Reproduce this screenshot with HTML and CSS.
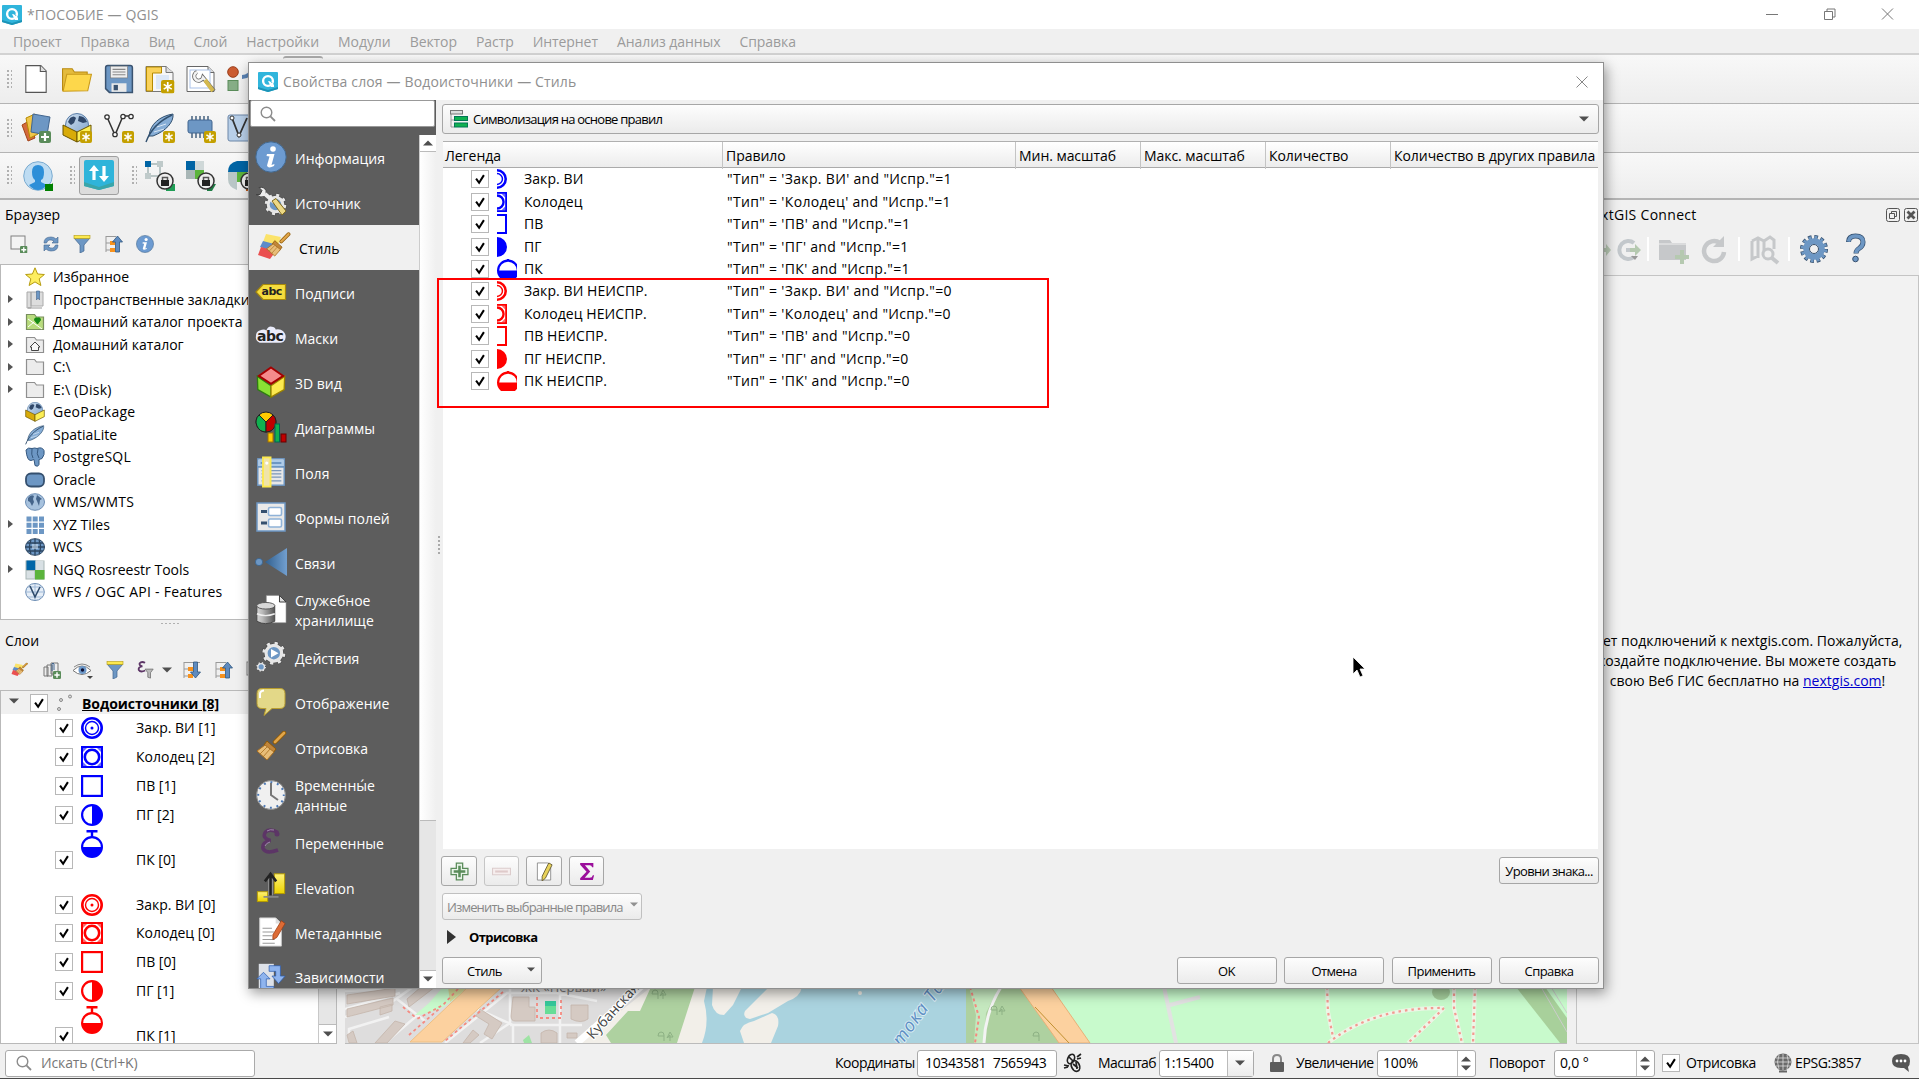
FILE: index.html
```html
<!DOCTYPE html>
<html lang="ru">
<head>
<meta charset="utf-8">
<title>*ПОСОБИЕ — QGIS</title>
<link rel="stylesheet" href="styles.css">
</head>
<body>
<svg class="sprite" aria-hidden="true">
  <defs>
    <linearGradient id="gRel" x1="0" x2="1"><stop offset="0" stop-color="#31608f"/><stop offset="1" stop-color="#729fcf"/></linearGradient>
    <linearGradient id="gDb" x1="0" x2="1"><stop offset="0" stop-color="#d5d5d5"/><stop offset=".3" stop-color="#bbb"/><stop offset="1" stop-color="#555"/></linearGradient>
    <linearGradient id="gElev" x1="0" y1="0" x2="0" y2="1"><stop offset="0" stop-color="#fff27a"/><stop offset="1" stop-color="#edd400"/></linearGradient>
    <linearGradient id="gEarth" x1="0" y1="0" x2="1" y2="1"><stop offset="0" stop-color="#cfe0f0"/><stop offset="1" stop-color="#7fa3cc"/></linearGradient>
  </defs>
  <symbol id="logo" viewBox="0 0 20 20"><path d="M0 1q0-1 1-1h18q1 0 1 1v16l-10 3-10-3z" fill="#30b5dc"/><path d="M0 15l10 3 10-3v2l-10 3-10-3z" fill="#1c93b6"/><circle cx="10" cy="9" r="4.900" fill="none" stroke="#fff" stroke-width="2.400"/><path d="M10 9h3l3 4v2h-3z" fill="#fff"/><path d="M9.500 8.500l2.500.3 2 2" stroke="#30b5dc" fill="none"/></symbol>
  <symbol id="check" viewBox="0 0 18 18"><path d="M4.600 8.600L8 13.200 13.400 4.600" fill="none" stroke="#000" stroke-width="2.300"/></symbol>
  <symbol id="star6" viewBox="0 0 12 12"><rect width="12" height="12" rx="2" fill="#c4a000"/><path d="M6 1.800v8.400M2.400 3.900l7.200 4.200M9.600 3.900L2.400 8.100" stroke="#fff" stroke-width="1.500"/></symbol>
  <symbol id="plusb" viewBox="0 0 12 12"><rect width="12" height="12" rx="2" fill="#5a8c5a"/><path d="M6 2v8M2 6h8" stroke="#fff" stroke-width="2.200"/></symbol>
  <symbol id="mag" viewBox="0 0 16 16"><circle cx="6.500" cy="6.500" r="5.300" fill="none" stroke="#8c8c8c" stroke-width="1.400"/><path d="M10.400 10.400L15 15" stroke="#8c8c8c" stroke-width="1.800"/></symbol>
  <symbol id="new" viewBox="0 0 28 28"><path d="M4.500 1.500h14l5 5v20h-19z" fill="#fff" stroke="#555"/><path d="M18 1.500v5.500h5.500" fill="#ddd" stroke="#555"/></symbol>
  <symbol id="open" viewBox="0 0 28 28"><path d="M.5 25V4.500h9l2 3h12V12" fill="#e4bb3c" stroke="#b98a11"/><path d="M1 25.500L4.500 9.500h23L24 25z" fill="#fdd74b" stroke="#c99a1b"/></symbol>
  <symbol id="save" viewBox="0 0 28 28"><path d="M1.500 3.500q0-2 2-2h21q2 0 2 2v23H5l-3.500-3.500z" fill="#6d97c4" stroke="#3a5370" stroke-width="1.400"/><rect x="6" y="2" width="16" height="11" fill="#eee" stroke="#777" stroke-width=".6"/><path d="M8 5h12M8 7.500h12M8 10h12" stroke="#888"/><rect x="7" y="18" width="14" height="8" fill="#eaeaea"/><rect x="9" y="19.500" width="4" height="5" fill="#3a5370"/></symbol>
  <symbol id="layoutnew" viewBox="0 0 30 28"><path d="M1 1.500h20l7 6v19H1z" fill="#f7f7f7" stroke="#777"/><path d="M21 1.500v6h7" fill="#ddd" stroke="#777"/><path d="M1.500 2h15v6h-9v18h-6z" fill="#fad25a" stroke="#b68b00"/><path d="M11 10h13v14H11z" fill="#dde8f7"/><use href="#star6" x="16" y="15" width="13.500" height="13.500"/></symbol>
  <symbol id="layoutmgr" viewBox="0 0 30 28"><path d="M1 1.500h21l6 6v19H1z" fill="#fff" stroke="#666"/><path d="M22 1.500v6h6" fill="#ddd" stroke="#666"/><rect x="4" y="5" width="20" height="18" fill="#fff" stroke="#a9c1e8"/><path d="M11 7a4.500 4.500 0 1 0 6 5.500L28 26" fill="none" stroke="#666" stroke-width="4"/><path d="M11 7a4.500 4.500 0 1 0 6 5.500L20 16" fill="none" stroke="#f2f2f2" stroke-width="2.500"/><path d="M19 15l8 11" stroke="#d4b94e" stroke-width="4"/></symbol>
  <symbol id="stylemgr" viewBox="0 0 30 28"><circle cx="6" cy="7" r="5.300" fill="#cb5b30" stroke="#9b3d19"/><rect x="1" y="15.500" width="10" height="10" fill="#86ad86" stroke="#5a8c5a"/><path d="M15 12q8 0 12-10" stroke="#5a83b5" stroke-width="4" fill="none"/></symbol>
  <symbol id="dsm" viewBox="0 0 30 30"><path d="M1 12l7-4 6 17-7 3z" fill="#d46a3b" stroke="#a3431a"/><path d="M5 5l9-4 3 20-8 4z" fill="#efc54a" stroke="#b68b00"/><path d="M12 1l17 3-3 18-16-3z" fill="#6d97c4" stroke="#41658f"/><use href="#plusb" x="18" y="18" width="12" height="12"/></symbol>
  <symbol id="geopk" viewBox="0 0 30 30"><circle cx="15" cy="12" r="11.500" fill="url(#gEarth)" stroke="#5b7ea8"/><path d="M8 5q4-3 6 0l-2 5-3 2-3-3zM17 3q6 0 8 6l-4 1-5-2z" fill="#30486a"/><path d="M1 12l14 7v10L1 22z" fill="#d8ab09" stroke="#6b5500"/><path d="M29 12l-14 7v10l14-7z" fill="#fcee55" stroke="#6b5500"/></symbol>
  <symbol id="shp" viewBox="0 0 30 30"><path d="M3 4l8 18L19 3h8" fill="none" stroke="#333" stroke-width="1.500"/><g fill="#fff" stroke="#333" stroke-width="1.300"><circle cx="3" cy="4" r="2.200"/><circle cx="11" cy="21.500" r="2.200"/><circle cx="19" cy="3.500" r="2.200"/><circle cx="27" cy="3.500" r="2.200"/></g></symbol>
  <symbol id="feather" viewBox="0 0 30 30"><path d="M4 23C5 11 15 3 28 1c1 8-7 17-20 22z" fill="#86add6" stroke="#31506f"/><path d="M1 29C5 18 14 8 27 2" fill="none" stroke="#31506f" stroke-width="1.400"/><path d="M9 19l10-3M12 14l9-3" stroke="#d9e7f4"/></symbol>
  <symbol id="chip" viewBox="0 0 30 30"><path d="M6 3v22M10 3v22M14 3v22M18 3v22M22 3v22" stroke="#45617f" stroke-width="1.500"/><rect x="2" y="7" width="24" height="13" rx="2" fill="#6d97c4" stroke="#41658f"/></symbol>
  <symbol id="virt" viewBox="0 0 30 30"><rect x="1" y="2" width="27" height="26" rx="2" fill="#b8cfe8" stroke="#6d87a8"/><path d="M5 5l7 18 8-18" fill="none" stroke="#333" stroke-width="1.800"/><circle cx="5" cy="5" r="2" fill="#fff" stroke="#333"/><circle cx="12" cy="22" r="2" fill="#fff" stroke="#333"/></symbol>
  <symbol id="user" viewBox="0 0 30 30"><circle cx="15" cy="15" r="14.300" fill="#bedcf2" stroke="#7aabd0"/><path d="M9 11q0-7 6-7t6 7-3 8v2l6 3q-4 5-9 5t-9-5l6-3v-2q-3-2-3-8z" fill="#2d8fd8"/><path d="M30 22v8h-8z" fill="#008000"/><rect x="22" y="23" width="8" height="7" fill="#008000"/></symbol>
  <symbol id="sync" viewBox="0 0 30 30"><path d="M0 2q0-2 2-2h26q2 0 2 2v24l-15 4-15-4z" fill="#2fb4da"/><path d="M0 22l15 5 15-5v4l-15 4-15-4z" fill="#3aa5a9"/><path d="M10 20V8M20 6v12" stroke="#fff" stroke-width="3.200"/><path d="M5 11l5-6 5 6zM15 16h10l-5 6z" fill="#fff"/></symbol>
  <symbol id="lock" viewBox="0 0 18 18"><circle cx="9" cy="9" r="8" fill="#eee" stroke="#333" stroke-width="1.500"/><rect x="5" y="8" width="8" height="6" fill="#222"/><path d="M6.500 8V5.500h5V8" stroke="#555" fill="none" stroke-width="1.500"/></symbol>
  <symbol id="rr1" viewBox="0 0 30 30"><path d="M3 3h13M3 3v12h12V3" fill="none" stroke="#a5b5b5" stroke-width="1.500"/><rect width="6" height="6" fill="#0064a4"/><rect x="12" y="0" width="6" height="6" fill="#bfcaca"/><rect x="0" y="12" width="6" height="6" fill="#bfcaca"/><path d="M21 23h9v7h-9z" fill="#1f9d55"/><use href="#lock" x="11" y="11" width="18" height="18"/></symbol>
  <symbol id="rr2" viewBox="0 0 30 30"><rect width="9" height="9" fill="#0064a4"/><rect x="9" width="9" height="9" fill="#cfd8d8"/><rect y="9" width="9" height="9" fill="#a8b6b6"/><rect x="9" y="9" width="9" height="9" fill="#5bb43c"/><path d="M21 23h9l-4 7h-5z" fill="#1f7d45"/><use href="#lock" x="11" y="11" width="18" height="18"/></symbol>
  <symbol id="rr3" viewBox="0 0 30 30"><path d="M9 0h11v11H0q0-9 9-11" fill="#0064a4"/><path d="M0 11h9v18Q0 26 0 18z" fill="#b9c6c6"/><rect x="9" y="11" width="10" height="10" fill="#5bb43c"/><path d="M18 24h10v6H18z" fill="#c05a1a"/><use href="#lock" x="12" y="11" width="18" height="18"/></symbol>
  <symbol id="addl" viewBox="0 0 18 18"><rect x="1" y="1" width="14" height="13" fill="#f4f4f4" stroke="#808080"/><use href="#plusb" x="10" y="11" width="7.500" height="7.500"/></symbol>
  <symbol id="refresh" viewBox="0 0 18 18"><path d="M2 8q0-6 7-6 3 0 5 2l2-2v6h-6l2-2Q6 3 4.500 8z" fill="#6d97c4" stroke="#41658f" stroke-width=".6"/><path d="M16 10q0 6-7 6-3 0-5-2l-2 2v-6h6l-2 2q6 3 7.500-2z" fill="#6d97c4" stroke="#41658f" stroke-width=".6"/></symbol>
  <symbol id="filter" viewBox="0 0 18 18"><path d="M1 3h16l-6 7v6l-4 2v-8z" fill="#6d97c4" stroke="#41658f" stroke-width=".7"/><rect x="1" y="0.500" width="16" height="3" fill="#fce94f" stroke="#b59b10" stroke-width=".6"/></symbol>
  <symbol id="collapse" viewBox="0 0 18 18"><path d="M1 1v16M1 1.500h10M1 8h4M1 15h4" stroke="#999" fill="none"/><path d="M5 6h5v4H5zM5 13h5v4H5z" fill="#f7921e"/><path d="M12.500 1l5 6h-3v10h-4V7h-3z" fill="#5f8bbf" stroke="#2f557f" stroke-width=".8"/></symbol>
  <symbol id="expand" viewBox="0 0 18 18"><path d="M1 1v16M1 1.500h16M1 8h4M1 15h4" stroke="#999" fill="none"/><path d="M5 6h5v4H5zM5 13h5v4H5z" fill="#f7921e"/><path d="M12.500 17l5-6h-3V1h-4v10h-3z" fill="#5f8bbf" stroke="#2f557f" stroke-width=".8"/></symbol>
  <symbol id="info" viewBox="0 0 32 32"><circle cx="16" cy="16" r="15.200" fill="#6d9bd1" stroke="#44698f"/><circle cx="18" cy="8" r="2.800" fill="#fff"/><path d="M12 13h7.500l-3 11 3-1-.5 2q-6 3-7-.5l2.500-9-3-.5z" fill="#fff"/></symbol>
  <symbol id="star" viewBox="0 0 20 20"><path d="M10 .8l2.600 6.200 6.800.5-5.200 4.300 1.700 6.700L10 14.900l-5.900 3.600 1.700-6.700L.6 7.500 7.400 7z" fill="#fdee5f" stroke="#b59b10"/></symbol>
  <symbol id="bmark" viewBox="0 0 20 20"><path d="M2 2h4v16H2zM6 2h12v14H6z" fill="#ddd" stroke="#aaa"/><path d="M3 18h14" stroke="#999"/><path d="M11.500 1h3v9l-1.500-2-1.500 2z" fill="#6d97c4" stroke="#41658f" stroke-width=".6"/></symbol>
  <symbol id="folder" viewBox="0 0 20 20"><path d="M1.500 17.500v-15h8l2 2.500h7v12.500z" fill="#ececec" stroke="#8f8f8f" stroke-width="1.200"/></symbol>
  <symbol id="fproj" viewBox="0 0 20 20"><path d="M1.500 17.500v-15h8l2 2.500h7v12.500z" fill="#b9dc7e" stroke="#7a8f5f" stroke-width="1.200"/><path d="M3 7l14 10M3 15l6-5" stroke="#fff"/><path d="M12.500 12l-3-4q0-3 3-2 3-1 3 2z" fill="#168a16" stroke="#168a16"/></symbol>
  <symbol id="fhome" viewBox="0 0 20 20"><use href="#folder" width="20" height="20"/><path d="M5 12l5-5 5 5h-1.500v3.500h-7V12z" fill="#f6f6f6" stroke="#444"/></symbol>
  <symbol id="pg" viewBox="0 0 20 20"><path d="M1 3q2-3 6-1.500 3-1 5 0 5-2 7 2 1 4-2 8l-3 1v5q-1 3-4 1l-1-6-3 1Q2 14 1 3z" fill="#6d97c4" stroke="#35587f"/><path d="M7 2q-1 6 1 9M13 2q-2 5 1 9" fill="none" stroke="#35587f"/></symbol>
  <symbol id="oracle" viewBox="0 0 20 20"><rect x="1" y="3.500" width="18" height="13" rx="5" fill="#6d97c4" stroke="#35506f" stroke-width="1.800"/></symbol>
  <symbol id="earth" viewBox="0 0 20 20"><ellipse cx="10" cy="10" rx="9.500" ry="8.300" fill="#a7c2de" stroke="#6b8cb3"/><path d="M3 6q3-4 6-2l-1 3 1 3-2 4-2-4-2-1zM12 3l5 4-2 1-1 6-2-5-1-2z" fill="#44648a"/></symbol>
  <symbol id="tiles" viewBox="0 0 20 20"><path d="M1.500 1.500h5v5h-5zM7.700 1.500h5v5h-5zM14 1.500h5v5h-5zM1.500 7.700h5v5h-5zM7.700 7.700h5v5h-5zM14 7.700h5v5h-5zM1.500 14h5v5h-5zM7.700 14h5v5h-5zM14 14h5v5h-5z" fill="#6d97c4"/></symbol>
  <symbol id="wcs" viewBox="0 0 20 20"><ellipse cx="10" cy="10" rx="9.500" ry="8.300" fill="#6d97c4" stroke="#2c4560"/><path d="M10 1.700v16.600M.5 10h19M2 6h16M2 14h16M6 3q-3 7 0 14M14 3q3 7 0 14" fill="none" stroke="#2c4560" stroke-width="1.300"/><path d="M7 7h6v5H7z" fill="#c8daec" opacity=".6"/></symbol>
  <symbol id="ngq" viewBox="0 0 20 20"><rect x=".5" y=".5" width="19" height="19" fill="#a8b6b6"/><rect x="1.500" y=".5" width="9" height="9.500" fill="#0066a8"/><rect x="10.500" y="1" width="8" height="9" fill="#d8e0e4"/><rect x="1.500" y="11" width="8" height="7.500" fill="#d8e0e4"/><rect x="10" y="10" width="9.500" height="9.500" fill="#5bb43c"/></symbol>
  <symbol id="wfs" viewBox="0 0 20 20"><ellipse cx="10" cy="10" rx="9.300" ry="8.500" fill="#e6eef7" stroke="#6b8cb3"/><path d="M10 2v16M1 10h18M3 5h14M3 15h14" stroke="#9fb9d8"/><path d="M5 4l5 11 5-10" fill="none" stroke="#2e4a6b" stroke-width="1.600"/></symbol>
  <symbol id="gear" viewBox="0 0 32 32"><circle cx="16" cy="16" r="12.500" fill="none" stroke="#444" stroke-width="6.500" stroke-dasharray="5 4.820"/><circle cx="16" cy="16" r="10.500" fill="none" stroke="#444" stroke-width="5"/><circle cx="16" cy="16" r="12.300" fill="none" stroke="#e6e6e6" stroke-width="5.500" stroke-dasharray="4 5.660" stroke-dashoffset="-.5"/><circle cx="16" cy="16" r="10.200" fill="#6d97c4" stroke="#e6e6e6" stroke-width="4.200"/></symbol>
  <symbol id="source" viewBox="0 0 32 32"><use href="#gear" x="9" y="7" width="23" height="23"/><path d="M4 1.500q5-1 7 3 1 4-1 6-4 2-9-2l4 0 2-4zM10 9l8 7" fill="#eee" stroke="#444"/><path d="M10 8l9 8" stroke="#eee" stroke-width="4"/><path d="M17 15l4-2.500L31 25l-4 4z" fill="#ecd884" stroke="#806a20"/></symbol>
  <symbol id="brush" viewBox="0 0 32 32"><path d="M29 2l-9 9" stroke="#8f5902" stroke-width="4.500" stroke-linecap="round"/><path d="M29 2l-9 9" stroke="#e0a54a" stroke-width="2.800" stroke-linecap="round"/><path d="M12 10l9 8-3 4-9-8z" fill="#c1853a" stroke="#8f5902"/><path d="M10 14l9 7-7 8L2 20z" fill="#e8bd78" stroke="#a86e20"/><path d="M12 16l-7 7M15 18l-7 8" stroke="#a86e20" stroke-width=".8"/></symbol>
  <symbol id="stylei" viewBox="0 0 36 32"><path d="M9 3l15 3-4 10-14-5z" fill="#fbe36a"/><path d="M6 10l15 4-3 7L3 16z" fill="#5e8bc9"/><path d="M4 16l15 4-6 8-12-4z" fill="#ea5050"/><use href="#brush" x="8" y="1" width="26" height="27"/></symbol>
  <symbol id="abc" viewBox="0 0 32 32"><path d="M1 16l7-7.500h22.500v15H8z" fill="#f5dc3e" stroke="#a8890a" stroke-width="1.200"/></symbol>
  <symbol id="mask" viewBox="0 0 34 32"><path d="M5 9q5-2 7 0 2-5 6-4 3 0 4 3 5-1 8 2 4 4 2 9-2 4-6 3H5Q0 20 1 15q0-5 4-6z" fill="#eaecfb"/></symbol>
  <symbol id="cube" viewBox="0 0 32 34"><path d="M1.500 11L16 21v12L2 25z" fill="#8ae234" stroke="#2e7d10" stroke-width="1.400"/><path d="M30.500 11L16 21v12l14-8z" fill="#fce94f" stroke="#9c8200" stroke-width="1.400"/><path d="M16 1.500L29 10.500 16 19 3 10.500z" fill="#f58b8b" stroke="#a40000" stroke-width="2"/></symbol>
  <symbol id="diag" viewBox="0 0 32 32"><circle cx="11" cy="11" r="10" fill="#fc0" stroke="#222"/><path d="M11 11L4 4a10 10 0 0 0 7 17z" fill="#10b050" stroke="#222"/><path d="M11 11l7-7a10 10 0 0 1-7 17z" fill="#c00000" stroke="#222"/><rect x="13" y="22" width="5" height="9" fill="#fc0" stroke="#a07000"/><rect x="20" y="13" width="4.500" height="18" fill="#10b050" stroke="#065"/><rect x="26" y="23" width="5" height="8" fill="#c00000" stroke="#600"/></symbol>
  <symbol id="fields" viewBox="0 0 32 34"><rect x="2" y="3" width="28" height="28" fill="#e7e7e7" stroke="#6d97c4" stroke-width="1.500"/><path d="M2.500 4h27v7h-27z" fill="#aecbe8"/><path d="M5 7.500h22M2 11.500h28" stroke="#6d97c4" stroke-width="2"/><path d="M6 15.500h21M6 19h21M6 22.500h21M6 26.500h21" stroke="#7b98bb" stroke-width="1.300"/><rect x="7.500" y="1.500" width="8" height="31" fill="#f0e4a8" stroke="#fce94f" stroke-width="2"/><circle cx="11.500" cy="7.500" r="1.700" fill="#fff"/></symbol>
  <symbol id="forms" viewBox="0 0 32 32"><rect x="2" y="2" width="28" height="28" fill="#e9e9e9" stroke="#6d97c4" stroke-width="1.500"/><path d="M6 10.500h6M6 22h6" stroke="#35506f" stroke-width="2.800"/><rect x="13.500" y="6.500" width="13" height="8" rx="1.500" fill="#fff" stroke="#8fb2d8" stroke-width="1.600"/><rect x="13.500" y="18" width="13" height="8" rx="1.500" fill="#fff" stroke="#8fb2d8" stroke-width="1.600"/></symbol>
  <symbol id="rel" viewBox="0 0 32 32"><path d="M10 16L32 2v28z" fill="url(#gRel)"/><circle cx="4" cy="16" r="3.600" fill="#6d97c4" stroke="#31608f" stroke-width=".7"/></symbol>
  <symbol id="db" viewBox="0 0 32 34"><path d="M11 1.500h14l7 7v22H11z" fill="#fff" stroke="#888" stroke-width=".6"/><path d="M25 1.500v7h7z" fill="#ddd" stroke="#333"/><path d="M1 13v16q9 5 19 0V13z" fill="url(#gDb)" stroke="#444"/><ellipse cx="10.500" cy="12.500" rx="9.700" ry="3.500" fill="#d8d8d8" stroke="#555"/><path d="M1 21q9 4 19 0" stroke="#eee" fill="none" stroke-width="1.500"/></symbol>
  <symbol id="action" viewBox="0 0 32 34"><use href="#gear" x="6" y="0" width="26" height="26"/><path d="M16 8.500l8 4.500-8 4.500z" fill="#fff"/><use href="#gear" x="0" y="22" width="11" height="11"/></symbol>
  <symbol id="bubble" viewBox="0 0 32 32"><path d="M7 2.500h18q5 0 5 5v10q0 5-5 5h-8l-8 7 2-7H7q-5 0-5-5v-10q0-5 5-5z" fill="#e3d888" stroke="#b89d2e"/><path d="M5 12V8q0-3 4-3.500" fill="none" stroke="#fff" stroke-width="2"/></symbol>
  <symbol id="clock" viewBox="0 0 32 32"><circle cx="16" cy="16" r="14.500" fill="#f0f0f0" stroke="#8a8a8a"/><circle cx="16" cy="16" r="12.800" fill="none" stroke="#4a78b5" stroke-width="2" stroke-dasharray="2 4.700" stroke-dashoffset="1"/><path d="M16 4v12l7 5" fill="none" stroke="#777" stroke-width="2"/></symbol>
  <symbol id="eps" viewBox="0 0 32 32"><path d="M23 6.500Q15 2 10.500 6q-4 6 5 8.500Q7 16 8 22.500q3 6 15 1.500" fill="none" stroke="#5c3566" stroke-width="3.600"/><circle cx="22" cy="8" r="2.500" fill="#5c3566"/><path d="M12 5q3-2 7-1M10 20q1-3 5-4" stroke="#a088ac" fill="none"/></symbol>
  <symbol id="elev" viewBox="0 0 32 34"><rect x="19.500" y="3" width="11" height="21" fill="url(#gElev)" stroke="#b59b00"/><rect x="1.500" y="22" width="11" height="10.500" fill="url(#gElev)" stroke="#b59b00"/><path d="M15.500 26V4" stroke="#aaa" stroke-width="4.500"/><path d="M15.500 26V3M9.500 11l6-8 6 8" fill="none" stroke="#222" stroke-width="2.800"/><path d="M8 27.500h16" stroke="#888" stroke-width="1.800"/></symbol>
  <symbol id="meta" viewBox="0 0 32 34"><path d="M4 2h17l6 6v24H4z" fill="#fff" stroke="#ccc"/><path d="M21 2v6h6" fill="#ddd"/><path d="M7 13h10M7 17h12M7 21h10M7 25h13M7 29h13" stroke="#999" stroke-width="1.200"/><path d="M27 5l4 3-9 15-4 2 0-5z" fill="#dd6b35" stroke="#9c3c12" stroke-width=".8"/></symbol>
  <symbol id="dep" viewBox="0 0 32 34"><path d="M3 3h16v29H3z" fill="#dde1e8"/><path d="M14 5h12v11h5l-7 8-7-8h4v-5h-7z" fill="#8fb4ee" stroke="#2f5fb0" stroke-width=".8"/><path d="M1 19l7-7 7 7h-4v8h8v5H5V19z" fill="#8fb4ee" stroke="#2f5fb0" stroke-width=".8"/></symbol>
  <symbol id="eye" viewBox="0 0 20 18"><path d="M0 9.500q9-9 18 0-9 8-18 0z" fill="#fff" stroke="#777"/><circle cx="9.500" cy="9" r="4" fill="#6b97c8"/><circle cx="9.500" cy="9" r="1.700" fill="#113"/><path d="M1 6q8-6 16 0" fill="none" stroke="#888"/><path d="M14 15h6l-3 3z" fill="#444"/></symbol>
  <symbol id="addg" viewBox="0 0 18 18"><path d="M1 6h4v9H1zM4 4h5v11H4zM8 2h7v11H8z" fill="#eee" stroke="#777"/><path d="M9 10V3q1-2 2 0v6" stroke="#41658f" fill="none"/><use href="#plusb" x="10" y="10" width="8" height="8"/></symbol>
  <symbol id="efil" viewBox="0 0 20 20"><path d="M9 2Q5 0 3 2.500q-1 2.500 3 3.500-5 .5-4 4 2 3 7 .5" fill="none" stroke="#5c3566" stroke-width="2"/><path d="M9 9h9l-3 4v6l-3-1v-5z" fill="#bbb" stroke="#666" stroke-width=".8"/></symbol>
  <symbol id="dots3" viewBox="0 0 18 18"><g fill="#ddd" stroke="#888"><circle cx="6" cy="6" r="1.500"/><circle cx="15" cy="2.500" r="1.500"/><circle cx="4" cy="15" r="1.500"/></g></symbol>
  <symbol id="s-vi" viewBox="0 0 22 22"><circle cx="11" cy="11" r="9.700" fill="none" stroke="currentColor" stroke-width="2.600"/><circle cx="11" cy="11" r="6.500" fill="none" stroke="currentColor" stroke-width="1.400"/><circle cx="11" cy="11" r="1.500" fill="currentColor"/></symbol>
  <symbol id="s-vih" viewBox="0 0 22 22"><circle cx="11" cy="11" r="9.600" fill="none" stroke="currentColor" stroke-width="2.800"/><circle cx="11" cy="11" r="6" fill="none" stroke="currentColor" stroke-width="1.600"/></symbol>
  <symbol id="s-kol" viewBox="0 0 22 22"><rect x="1" y="1" width="20" height="20" fill="none" stroke="currentColor" stroke-width="2"/><circle cx="11" cy="11" r="7.200" fill="none" stroke="currentColor" stroke-width="2.600"/><path d="M2 2h4L2 6zM20 2v4l-4-4zM2 20v-4l4 4zM20 20h-4l4-4z" fill="currentColor" opacity=".6"/></symbol>
  <symbol id="s-pv" viewBox="0 0 22 22"><rect x="1.100" y="1.100" width="19.800" height="19.800" fill="#fff" stroke="currentColor" stroke-width="2.200"/></symbol>
  <symbol id="s-pg" viewBox="0 0 22 22"><circle cx="11" cy="11" r="9.900" fill="none" stroke="currentColor" stroke-width="2.200"/><path d="M11 1a10 10 0 0 1 0 20z" fill="currentColor"/></symbol>
  <symbol id="s-pk" viewBox="0 0 22 28"><circle cx="11" cy="17" r="9.900" fill="none" stroke="currentColor" stroke-width="2.200"/><path d="M1 17a10 10 0 0 0 20 0z" fill="currentColor"/><path d="M5.500 1.200h11M11 1v6" stroke="currentColor" stroke-width="2.400"/></symbol>
  <symbol id="tri" viewBox="0 0 10 6"><path d="M0 .5h10L5 5.500z" fill="#4f4f4f"/></symbol>
</svg>

<div class="window">
  <header class="titlebar">
    <svg class="i20"><use href="#logo"/></svg><span class="ttl">*ПОСОБИЕ — QGIS</span>
    <svg class="winctl" viewBox="0 0 140 20"><g fill="none" stroke="#777"><path d="M4 10.500h12"/><path d="M62.500 7.500h8v8h-8zM65 7.500v-2.500h8v8h-2.500"/><path d="M120 4.500l11 11M131 4.500l-11 11"/></g></svg>
  </header>
  <nav class="menu"><span>Проект</span><span>Правка</span><span>Вид</span><span>Слой</span><span>Настройки</span><span>Модули</span><span>Вектор</span><span>Растр</span><span>Интернет</span><span>Анализ данных</span><span>Справка</span></nav>
  <div class="bar">
    <i class="grip"></i><div class="cells"><svg><use href="#new"/></svg><svg><use href="#open"/></svg><svg><use href="#save"/></svg><svg><use href="#layoutnew"/></svg><svg><use href="#layoutmgr"/></svg><svg><use href="#stylemgr"/></svg></div><i class="tab-top"></i>
  </div>
  <div class="bar">
    <i class="grip"></i><div class="cells"><svg><use href="#dsm"/></svg><svg><use href="#geopk"/><use href="#star6" x="18" y="18" width="12" height="12"/></svg><svg><use href="#shp"/><use href="#star6" x="18" y="18" width="12" height="12"/></svg><svg><use href="#feather"/><use href="#star6" x="18" y="18" width="12" height="12"/></svg><svg><use href="#chip"/><use href="#star6" x="18" y="18" width="12" height="12"/></svg><svg><use href="#virt"/></svg></div>
  </div>
  <div class="bar last">
    <i class="grip"></i><div class="cells one"><svg><use href="#user"/></svg></div><i class="grip"></i><div class="pressed"><svg><use href="#sync"/></svg></div><i class="grip"></i><div class="cells rr"><svg><use href="#rr1"/></svg><svg><use href="#rr2"/></svg><svg><use href="#rr3"/></svg></div>
  </div>

  <main class="work">
    <section class="left">
      <h2 class="dock-title">Браузер</h2>
      <div class="mini"><svg><use href="#addl"/></svg><svg><use href="#refresh"/></svg><svg><use href="#filter"/></svg><svg><use href="#collapse"/></svg><svg><use href="#info"/></svg></div>
      <ul class="tree">
        <li><b></b><svg><use href="#star"/></svg>Избранное</li>
        <li><b class="ar"></b><svg><use href="#bmark"/></svg>Пространственные закладки</li>
        <li><b class="ar"></b><svg><use href="#fproj"/></svg>Домашний каталог проекта</li>
        <li><b class="ar"></b><svg><use href="#fhome"/></svg>Домашний каталог</li>
        <li><b class="ar"></b><svg><use href="#folder"/></svg>C:\</li>
        <li class="lat"><b class="ar"></b><svg><use href="#folder"/></svg>E:\ (Disk)</li>
        <li class="lat"><b></b><svg><use href="#geopk"/></svg>GeoPackage</li>
        <li><b></b><svg><use href="#feather"/></svg>SpatiaLite</li>
        <li class="lat"><b></b><svg><use href="#pg"/></svg>PostgreSQL</li>
        <li><b></b><svg><use href="#oracle"/></svg>Oracle</li>
        <li class="lat"><b></b><svg><use href="#earth"/></svg>WMS/WMTS</li>
        <li><b class="ar"></b><svg><use href="#tiles"/></svg>XYZ Tiles</li>
        <li><b></b><svg><use href="#wcs"/></svg>WCS</li>
        <li><b class="ar"></b><svg><use href="#ngq"/></svg>NGQ Rosreestr Tools</li>
        <li class="lat"><b></b><svg><use href="#wfs"/></svg>WFS / OGC API - Features</li>
      </ul>
      <i class="split-h"></i>
      <h2 class="dock-title lay">Слои</h2>
      <div class="mini layers-bar"><svg><use href="#stylei"/></svg><svg><use href="#addg"/></svg><svg class="eye"><use href="#eye"/></svg><svg><use href="#filter"/></svg><svg><use href="#efil"/></svg><svg class="dd"><use href="#tri"/></svg><svg class="ex"><use href="#expand"/></svg><svg><use href="#collapse"/></svg><svg><use href="#addl"/></svg></div>
      <div class="layers">
        <div class="ltree">
          <div class="lroot"><svg class="tr"><use href="#tri"/></svg><svg class="cb"><use href="#check"/></svg><svg class="d3"><use href="#dots3"/></svg><strong>Водоисточники [8]</strong></div>
          <div class="lr blue"><svg class="cb"><use href="#check"/></svg><svg class="sy"><use href="#s-vi"/></svg>Закр. ВИ [1]</div>
          <div class="lr blue"><svg class="cb"><use href="#check"/></svg><svg class="sy"><use href="#s-kol"/></svg>Колодец [2]</div>
          <div class="lr blue"><svg class="cb"><use href="#check"/></svg><svg class="sy"><use href="#s-pv"/></svg>ПВ [1]</div>
          <div class="lr blue"><svg class="cb"><use href="#check"/></svg><svg class="sy"><use href="#s-pg"/></svg>ПГ [2]</div>
          <div class="lr tall blue"><svg class="cb"><use href="#check"/></svg><svg class="sy pk"><use href="#s-pk"/></svg>ПК [0]</div>
          <div class="lr red"><svg class="cb"><use href="#check"/></svg><svg class="sy"><use href="#s-vi"/></svg>Закр. ВИ [0]</div>
          <div class="lr red"><svg class="cb"><use href="#check"/></svg><svg class="sy"><use href="#s-kol"/></svg>Колодец [0]</div>
          <div class="lr red"><svg class="cb"><use href="#check"/></svg><svg class="sy"><use href="#s-pv"/></svg>ПВ [0]</div>
          <div class="lr red"><svg class="cb"><use href="#check"/></svg><svg class="sy"><use href="#s-pg"/></svg>ПГ [1]</div>
          <div class="lr tall red"><svg class="cb"><use href="#check"/></svg><svg class="sy pk"><use href="#s-pk"/></svg>ПК [1]</div>
        </div>
        <div class="vscroll"><i></i><svg><use href="#tri"/></svg></div>
      </div>
    </section>

    <section class="map">
      <svg viewBox="0 0 1222 56">
        <rect width="1222" height="56" fill="#dedddd"/>
        <g fill="none" stroke="#f2f2f2" stroke-width="2.500"><path d="M0 4l50 -2M0 30l48-16 20-14M0 22l55-16M4 56V42l40-12M40 56l35-30M52 12l28 22M100 56l62-50h50l40 8M128 20l40 18v18M165 38h72M165 0v38M215 0v56M135 56l30-20"/></g>
        <g fill="#d5cac3" stroke="#c4b5ab" stroke-width=".8"><path d="M2 8l48-7v8L2 17zM2 22l46-11v7L2 30zM35 20l12-3v7l-12 4zM62 12L76 0h14L64 20zM30 56l20-22 10 3-18 19zM2 48l6-4 4 12H4zM168 10h16v10h6v14h-20q-4 0-4-5zM226 18h17v14q-7 5-17 0zM196 46q8-6 16 0v10h-16zM135 22l22 14-10 16-8-5 5-10-13-8zM118 56l10-13 6 5-9 8zM222 46h10v5h-10zM232 0h20v4h-20z"/></g>
        <path d="M70 28l14-12L98 0h17l4 6-24 16-20 6z" fill="#c8facc"/><path d="M103 0h20l-18 15z" fill="#d8dc9a"/>
        <path d="M200 14h11v13h-11z" fill="#67dd97"/><path d="M200 14h11v5h-11z" fill="#35c89a"/><path d="M178 53l6-5 3 8h-8z" fill="#9ee3a4"/>
        <path d="M123 0h34L97 55H65z" fill="#fcd19f" stroke="#eebf83"/>
        <g fill="none" stroke="#f58a80" stroke-width="1.800" stroke-dasharray="3 3"><path d="M113 2L98 18 72 32M58 20l12 10M192 10v21h24v-19M64 48l30-26M158 5L100 54"/></g>
        <path d="M235 56L306 0h330v56z" fill="#f2efe9"/>
        <path d="M232 56l68-60" stroke="#fff" stroke-width="7"/>
        <path d="M261 48l22-24h12L306 0h44l-18 56h-66z" fill="#aed1a0"/>
        <path d="M362 0h262v56H357q8-20 2-42z" fill="#aad3df"/>
        <path d="M368 0h29l-9 18-9 10q-9 0-12-10zM424 0h33q-2 10-14 14l-20 12-18 6q-8-1-5-8zM395 44q3-8 14-10l18-8q8 2 6 13l-7 17h-27z" fill="#f2efe9"/><circle cx="515" cy="6" r="2" fill="#f2efe9"/>
        <path d="M621 0h60l40 56H621z" fill="#aed1a0"/><path d="M624 0l7 28-2 28h10l2-30L654 0z" fill="#c5e8bf"/><path d="M656 0q-16 26-17 56" fill="none" stroke="#f3f3f3" stroke-width="3"/><path d="M625 0l9 30-4 26" fill="none" stroke="#f58a80" stroke-width="2" stroke-dasharray="3 3"/>
        <g fill="none" stroke="#8db184"><path d="M313 12v-6q0-3-3-3t-3 4h6M318 12V6l-3 3 3-6 3 5h-5M319 54v-6q0-3-3-3t-3 4h6M325 54v-6l-3 3 3-6 3 5h-5M652 28v-6q0-3-3-3t-3 4h6M657 28v-6l-3 3 3-6 3 5h-5M694 54v-6q0-3-3-3t-3 4h6"/></g>
        <path d="M704 0h518v56H738z" fill="#c8facc"/>
        <path d="M674 0h32l39 56h-31z" fill="#fcd19f" stroke="#e8b078"/><path d="M690 20l34 36" stroke="#c09030"/>
        <path d="M819 0l12 56M825 18l30-8" stroke="#e2e2e2" stroke-width="4"/>
        <path d="M982 0l1 25 5 25M983 56q45-36 116-35M1109 0v21l8 35M1099 21l-36 35M1130 0l-2 56" fill="none" stroke="#edf5e6" stroke-width="4"/>
        <path d="M982 0l1 25 5 25M983 56q45-36 116-35M1109 0v21l8 35M1099 21l-36 35M1130 0l-2 56" fill="none" stroke="#f39a90" stroke-width="2.200" stroke-dasharray="2.500 4"/>
        <ellipse cx="1096" cy="5" rx="9" ry="8" fill="#a5cf9c"/>
        <path d="M1171 0h29l22 31v25h-7z" fill="#a8d09b"/><path d="M1196 0l26 45M1206 0l16 26" stroke="#ccc"/>
        <text class="m-road" transform="translate(248 53) rotate(-48)">Кубанская у</text>
        <text class="m-place" x="176" y="5">ЖК «Первый»</text>
        <text class="m-water" transform="translate(556 60) rotate(-54)">тока Та</text>
      </svg>
    </section>

    <aside class="right">
      <h2 class="dock-title">NextGIS Connect<svg class="dctl" viewBox="0 0 34 16"><g fill="none" stroke="#555"><rect x="1.500" y="1.500" width="13" height="13" rx="2"/><path d="M4.500 6.500h5v5h-5zM6.500 6.500v-2h5v5h-2"/><rect x="19.500" y="1.500" width="13" height="13" rx="2"/><path d="M22.500 4.500l7 7M29.500 4.500l-7 7" stroke-width="2.800"/></g></svg></h2>
      <svg class="ngbar" viewBox="0 0 343 46">
        <path d="M24 19h6v-4l5 6-5 6v-4h-6z" fill="#bccdb8"/>
        <path d="M58 14a9 9 0 1 0 0 14M50 21h6" fill="none" stroke="#c3c8cc" stroke-width="4"/><path d="M54 19h5v-4l6 6-6 6v-4h-5z" fill="#b5c9b0"/><path d="M55 27h7l-3 4z" fill="#999"/>
        <path d="M72 8v24M163 8v24M213 8v24" stroke="#fff" stroke-width="2"/>
        <path d="M83 31V11h11l2 3h14v17z" fill="#c6c8ca"/><path d="M83 15h27" stroke="#efefef"/><path d="M106 21v14M99 28h14" stroke="#b5c9b0" stroke-width="4"/>
        <path d="M144 14a10 10 0 1 0 4 9" fill="none" stroke="#c6c8ca" stroke-width="4.500"/><path d="M148 7v11h-11z" fill="#c6c8ca"/>
        <path d="M176 12l6-3 6 3 6-4 4 3v9M176 12v18l6-3M182 9v20M188 12v10" fill="none" stroke="#c6c8ca" stroke-width="3"/><circle cx="192" cy="25" r="5" fill="none" stroke="#c6c8ca" stroke-width="3"/><path d="M196 29l6 5" stroke="#c6c8ca" stroke-width="4"/>
        <circle cx="238" cy="20" r="11.500" fill="none" stroke="#35506f" stroke-width="5" stroke-dasharray="3.400 2.620"/><circle cx="238" cy="20" r="11.500" fill="none" stroke="#6d97c4" stroke-width="3.400" stroke-dasharray="2.400 3.620" stroke-dashoffset="-.5"/><circle cx="238" cy="20" r="7.800" fill="none" stroke="#6d97c4" stroke-width="6"/><circle cx="238" cy="20" r="4.500" fill="#f0f0f0" stroke="#35506f"/>
        <path d="M272.500 13q0-6 7-6 7.500 0 7.500 6 0 4-4 6.500-3 2-3 5" fill="none" stroke="#35506f" stroke-width="5"/><path d="M272.500 12.600q1-5.500 7-5.600 7.500 0 7.500 6 0 4-4 6.500-3 2-3 4.600" fill="none" stroke="#6d97c4" stroke-width="3.600"/><circle cx="279.500" cy="30" r="2.800" fill="#6d97c4" stroke="#35506f"/>
      </svg>
      <div class="ngbody"><p>Нет подключений к nextgis.com. Пожалуйста,<br>создайте подключение. Вы можете создать<br>свою Веб ГИС бесплатно на <a>nextgis.com</a>!</p></div>
    </aside>
  </main>

  <footer class="status">
    <div class="find"><svg><use href="#mag"/></svg>Искать (Ctrl+K)</div>
    <span class="lbl coord">Координаты</span><div class="box c1">10343581&nbsp; 7565943</div>
    <svg class="ext" viewBox="0 0 20 20"><g fill="none" stroke="#222" stroke-width="1.700"><ellipse cx="8" cy="6" rx="3.200" ry="5" transform="rotate(25 8 6)"/><ellipse cx="12.500" cy="13" rx="4" ry="5.500" transform="rotate(-25 12.500 13)"/><path d="M1 12l5 1M1 15l4-1M14 4l4-3M14 6l4-1M6 4l4 4M10 11l5 4M13 9l1 7"/></g></svg>
    <span class="lbl sc">Масштаб</span><div class="box c2">1:15400<b><svg><use href="#tri"/></svg></b></div>
    <svg class="padlock" viewBox="0 0 16 20"><path d="M4 10V6q0-4 4-4t4 4v4" fill="none" stroke="#888" stroke-width="2"/><rect x="1" y="9" width="14" height="10" rx="1" fill="#5c5c5c"/></svg>
    <span class="lbl zo">Увеличение</span><div class="box c3">100%<em><svg class="up"><use href="#tri"/></svg><svg><use href="#tri"/></svg></em></div>
    <span class="lbl rot">Поворот</span><div class="box c4">0,0 °<em><svg class="up"><use href="#tri"/></svg><svg><use href="#tri"/></svg></em></div>
    <svg class="cb"><use href="#check"/></svg><span class="lbl ren">Отрисовка</span>
    <svg class="globe" viewBox="0 0 20 20"><circle cx="10" cy="9" r="8.500" fill="#6a6a6a"/><path d="M10 1v16M2 9h16M3 5h14M3 13h14M6 2q-3 7 0 14M14 2q3 7 0 14" fill="none" stroke="#ddd" stroke-width=".8"/><path d="M6 18.500h8" stroke="#666" stroke-width="2"/></svg><span class="lbl epsg">EPSG:3857</span>
    <svg class="msg" viewBox="0 0 20 20"><path d="M10 1q9 0 9 7 0 4-2 6l1 5-5-4H10Q1 15 1 8t9-7z" fill="#555"/><g fill="#fff"><circle cx="6" cy="8" r="1.400"/><circle cx="10" cy="8" r="1.400"/><circle cx="14" cy="8" r="1.400"/></g></svg>
  </footer>
</div>

<div class="dialog">
  <header class="dlg-title"><svg class="i20"><use href="#logo"/></svg><span class="ttl">Свойства слоя — Водоисточники — Стиль</span><svg class="x" viewBox="0 0 14 14"><path d="M1.500 1.500l11 11M12.500 1.500l-11 11" stroke="#888" fill="none"/></svg></header>
  <div class="dlg-body">
    <aside class="side">
      <div class="sfind"><svg><use href="#mag"/></svg></div>
      <div class="slist">
        <ul>
          <li><svg><use href="#info"/></svg>Информация</li>
          <li><svg><use href="#source"/></svg>Источник</li>
          <li class="sel"><svg class="w"><use href="#stylei"/></svg>Стиль</li>
          <li><svg><use href="#abc"/><text x="6.500" y="18.500" class="abc">abc</text></svg>Подписи</li>
          <li><svg><use href="#mask"/><text x="2" y="20" class="abc big">abc</text></svg>Маски</li>
          <li><svg><use href="#cube"/></svg>3D вид</li>
          <li><svg><use href="#diag"/></svg>Диаграммы</li>
          <li><svg><use href="#fields"/></svg>Поля</li>
          <li><svg><use href="#forms"/></svg>Формы полей</li>
          <li><svg><use href="#rel"/></svg>Связи</li>
          <li class="two"><svg><use href="#db"/></svg><span>Служебное<br>хранилище</span></li>
          <li><svg><use href="#action"/></svg>Действия</li>
          <li><svg><use href="#bubble"/></svg>Отображение</li>
          <li><svg><use href="#brush"/></svg>Отрисовка</li>
          <li class="two"><svg><use href="#clock"/></svg><span>Временны́е<br>данные</span></li>
          <li><svg><use href="#eps"/></svg>Переменные</li>
          <li><svg><use href="#elev"/></svg>Elevation</li>
          <li><svg><use href="#meta"/></svg>Метаданные</li>
          <li class="dep"><svg><use href="#dep"/></svg>Зависимости</li>
        </ul>
        <div class="sscroll"><b><svg class="up"><use href="#tri"/></svg></b><i></i><s></s><b class="dn"><svg><use href="#tri"/></svg></b></div>
      </div>
    </aside>
    <i class="split-v"></i>
    <section class="panel">
      <div class="combo"><svg class="ri" viewBox="0 0 18 18"><path d="M1 4v13h3M1 10h3" stroke="#999" fill="none"/><rect x=".5" y=".5" width="12" height="3.500" fill="#ddd" stroke="#777"/><rect x="4.500" y="6.500" width="13" height="4" fill="#10b050" stroke="#075"/><rect x="4.500" y="13" width="13" height="4" fill="#10b050" stroke="#075"/></svg><span>Символизация на основе правил</span><svg class="ct"><use href="#tri"/></svg></div>
      <div class="table">
        <div class="thead"><span>Легенда</span><span>Правило</span><span>Мин. масштаб</span><span>Макс. масштаб</span><span>Количество</span><span>Количество в других правила</span></div>
        <div class="tr2 blue"><svg class="cb"><use href="#check"/></svg><svg class="half" viewBox="11 0 22 22"><use href="#s-vih" width="22" height="22"/></svg><span>Закр. ВИ</span><q>"Тип" = 'Закр. ВИ' and "Испр."=1</q></div>
        <div class="tr2 blue"><svg class="cb"><use href="#check"/></svg><svg class="half" viewBox="11 0 22 22"><use href="#s-kol" width="22" height="22"/></svg><span>Колодец</span><q>"Тип" = 'Колодец' and "Испр."=1</q></div>
        <div class="tr2 blue"><svg class="cb"><use href="#check"/></svg><svg class="half" viewBox="11 0 22 22"><use href="#s-pv" width="22" height="22"/></svg><span>ПВ</span><q>"Тип" = 'ПВ' and "Испр."=1</q></div>
        <div class="tr2 blue"><svg class="cb"><use href="#check"/></svg><svg class="half" viewBox="11 0 22 22"><use href="#s-pg" width="22" height="22"/></svg><span>ПГ</span><q>"Тип" = 'ПГ' and "Испр."=1</q></div>
        <div class="tr2 blue"><svg class="cb"><use href="#check"/></svg><svg class="half" viewBox="0 5.500 20 20"><use href="#s-pk" width="22" height="28"/></svg><span>ПК</span><q>"Тип" = 'ПК' and "Испр."=1</q></div>
        <div class="tr2 red"><svg class="cb"><use href="#check"/></svg><svg class="half" viewBox="11 0 22 22"><use href="#s-vih" width="22" height="22"/></svg><span>Закр. ВИ НЕИСПР.</span><q>"Тип" = 'Закр. ВИ' and "Испр."=0</q></div>
        <div class="tr2 red"><svg class="cb"><use href="#check"/></svg><svg class="half" viewBox="11 0 22 22"><use href="#s-kol" width="22" height="22"/></svg><span>Колодец НЕИСПР.</span><q>"Тип" = 'Колодец' and "Испр."=0</q></div>
        <div class="tr2 red"><svg class="cb"><use href="#check"/></svg><svg class="half" viewBox="11 0 22 22"><use href="#s-pv" width="22" height="22"/></svg><span>ПВ НЕИСПР.</span><q>"Тип" = 'ПВ' and "Испр."=0</q></div>
        <div class="tr2 red"><svg class="cb"><use href="#check"/></svg><svg class="half" viewBox="11 0 22 22"><use href="#s-pg" width="22" height="22"/></svg><span>ПГ НЕИСПР.</span><q>"Тип" = 'ПГ' and "Испр."=0</q></div>
        <div class="tr2 red"><svg class="cb"><use href="#check"/></svg><svg class="half" viewBox="0 5.500 20 20"><use href="#s-pk" width="22" height="28"/></svg><span>ПК НЕИСПР.</span><q>"Тип" = 'ПК' and "Испр."=0</q></div>
      </div>
      <div class="tools">
        <button class="tb"><svg viewBox="0 0 18 18"><path d="M6 1h6v5h5v6h-5v5H6v-5H1V6h5z" fill="#e8f3e8" stroke="#5a8c5a" stroke-width="1.200"/><path d="M9 3.500v11M3.500 9h11" stroke="#5a8c5a" stroke-width="2.400"/></svg></button>
        <button class="tb off"><svg viewBox="0 0 18 18"><path d="M.5 6h17v6H.5z" fill="#f6eeee" stroke="#dccccc"/><path d="M3 9h12" stroke="#dfcaca" stroke-width="2"/></svg></button>
        <button class="tb"><svg viewBox="0 0 18 20"><path d="M1.500 1h11l3 3v15h-14z" fill="#fff" stroke="#777" stroke-width=".8"/><path d="M13.500 1l3.500 2-7 14-3.500 3V15z" fill="#e8d25a" stroke="#5f5530" stroke-width=".9"/></svg></button>
        <button class="tb"><svg viewBox="0 0 18 18"><path d="M3 1h12.500v4h-1.200Q14 3 12 3H7.500l5 6-5.200 6H12q2.500 0 3-2.500h1.200L15 17H3v-1.500L9 9.300 3 2.500z" fill="#9b0f9b"/></svg></button>
        <button class="btn lv">Уровни знака...</button>
      </div>
      <div class="row2"><button class="btn edit">Изменить выбранные правила<svg><use href="#tri"/></svg></button></div>
      <div class="group"><i></i>Отрисовка</div>
      <div class="actions"><button class="btn sty">Стиль<svg><use href="#tri"/></svg></button><button class="btn okb">OK</button><button class="btn">Отмена</button><button class="btn">Применить</button><button class="btn">Справка</button></div>
    </section>
  </div>
</div>
<div class="hilite"></div>
<svg class="cursor" viewBox="0 0 14 22"><path d="M1 1v17l4-4 3 7 3-1.300-3-6.700h5z" fill="#000" stroke="#fff" stroke-width=".8"/></svg>
</body>
</html>
```
FILE: styles.css
```css
* { box-sizing: border-box; }
body { margin: 0; width: 1919px; height: 1079px; overflow: hidden; background: #f0f0f0; color: #000; font: 14px/18px "Open Sans", "Noto Sans", sans-serif; letter-spacing: 0; white-space: nowrap; }
svg { display: block; flex: none; }
h2, p, ul { margin: 0; padding: 0; font-size: inherit; font-weight: normal; }
li { list-style: none; }
i { font-style: normal; display: block; flex: none; }
q { quotes: none; letter-spacing: 0.33px; }
.sprite { position: absolute; width: 0; height: 0; }
.i20 { width: 20px; height: 20px; }
.blue svg.sy, .blue svg.half { color: #00f; }
.red svg.sy, .red svg.half { color: #f00; }
.cb { width: 18px; height: 18px; border: 1px solid #b8b8b8; background: #fff; }

.window { height: 1079px; display: flex; flex-direction: column; border-bottom: 1px solid #4a4a4a; }
.titlebar { height: 29px; flex: none; background: #fff; display: flex; align-items: center; padding: 0 17px 0 2px; color: #8f8f8f; }
.ttl { margin-left: 5px; letter-spacing: 0.15px; }
.winctl { width: 140px; height: 20px; margin-left: auto; margin-top: -1px; }
.menu { height: 26px; flex: none; display: flex; gap: 19px; padding: 4px 0 0 13px; color: #9b9b9b; border-bottom: 2px solid #d2d2d2; letter-spacing: -0.07px; }
.bar { height: 49px; flex: none; display: flex; align-items: center; background: linear-gradient(#f8f8f8, #ededed); border-bottom: 1px solid #b4b4b4; padding-left: 6px; }
.bar.last { height: 47px; border-bottom: 2px solid #b4b4b4; }
.grip { width: 6px; height: 21px; background-image: radial-gradient(circle, #b0b0b0 0.8px, transparent 1px); background-size: 4px 4px; }
.cells { display: flex; gap: 11.300px; padding-left: 9px; }
.cells svg { width: 30px; height: 30px; }
.tab-top { width: 40px; height: 47px; border-top: 2px solid #aaa; border-radius: 3px; margin-left: 26px; }
.cells.one { padding: 0 16px 0 11px; }
.pressed { width: 40px; height: 39px; border: 1px solid #a0a0a0; border-radius: 3px; background: #dcdcdc; margin: 0 12px 0 4px; padding: 3px 4px; }
.pressed svg { width: 30px; height: 30px; }
.cells.rr { padding-left: 8px; }

.work { flex: 1; min-height: 0; display: flex; }
.left { width: 337px; display: flex; flex-direction: column; }
.dock-title { height: 32px; flex: none; line-height: 30px; padding-left: 5px; }
.mini { height: 32px; flex: none; display: flex; gap: 13.500px; align-items: center; padding: 0 0 8px 10px; }
.mini svg { width: 18px; height: 18px; }
.tree { height: 356px; flex: none; background: #fff; border: 1px solid #b9b9b9; padding: 1px 0 0 7px; overflow: hidden; }
.tree li { height: 22.500px; display: flex; align-items: center; }
.tree li.lat { letter-spacing: 0.25px; }
.tree li svg { width: 20px; height: 20px; margin-right: 8px; }
.tree b { width: 17px; height: 9px; }
.tree b.ar::before { content: ""; display: block; width: 0; border: 4.500px solid transparent; border-left: 5px solid #555; border-right: 0; }
.split-h { width: 20px; height: 3px; margin: 2px 0 0 160px; background-image: radial-gradient(circle, #b0b0b0 0.8px, transparent 1px); background-size: 4px 3px; }
.dock-title.lay { height: 30px; line-height: 32px; }
.layers-bar { height: 35px; padding: 0 0 5px 11px; }
.layers-bar .eye { width: 20px; margin: 0 -1px; }
.layers-bar .dd { width: 10px; height: 6px; margin-left: -7px; }
.layers-bar .ex { margin-left: -2px; }
.layers { flex: 1; min-height: 0; display: flex; background: #fff; border: 1px solid #b9b9b9; }
.ltree { flex: 1; overflow: hidden; }
.lroot { height: 23px; background: #f0f0f0; display: flex; align-items: center; padding-left: 8px; }
.lroot .tr { width: 10px; height: 6px; margin: -3px 11px 0 0; }
.lroot .d3 { width: 18px; height: 18px; margin: 0 9px 0 7px; }
.lroot strong { text-decoration: underline; letter-spacing: -0.05px; padding-top: 3px; }
.lr { height: 28.800px; display: flex; align-items: center; padding-left: 54px; }
.lr .sy { width: 22px; height: 22px; margin: 0 33px 0 8px; }
.lr .pk { height: 28px; margin-top: -31px; }
.lr.tall { height: 61px; }
.vscroll { width: 18px; display: flex; flex-direction: column; border-left: 1px solid #c8c8c8; }
.vscroll i { flex: 1; background: #e6e6e6; border-bottom: 1px solid #bbb; }
.vscroll svg { width: 10px; height: 6px; margin: 6px 4px; }

.map { width: 1222px; margin: 0 0 0 8px; display: flex; align-items: flex-end; background: #e0dfdf; border-bottom: 1px solid #bbb; }
.map svg { width: 1222px; height: 56px; }
.m-road { font-size: 14px; fill: #444; letter-spacing: 0; stroke: #fff; stroke-width: 2px; paint-order: stroke; }
.m-place { font-size: 13px; fill: #777; }
.m-water { font-size: 18px; font-style: italic; fill: #5d8fc4; letter-spacing: 1px; stroke: #d9ebf3; stroke-width: 2px; paint-order: stroke; }
.right { flex: 1; margin-left: 9px; display: flex; flex-direction: column; }
.right .dock-title { display: flex; padding-left: 6px; align-items: center; letter-spacing: 0.3px; height: 30px; }
.dctl { width: 34px; height: 16px; margin: -1px 0 0 auto; }
.ngbar { width: 343px; height: 46px; margin-top: -1px; }
.ngbody { flex: 1; background: #f2f2f2; border: 1px solid #c4c4c4; padding-top: 355px; text-align: center; line-height: 20px; letter-spacing: 0.02px; }
.ngbody a { color: #00c; text-decoration: underline; }

.status { height: 34px; flex: none; display: flex; align-items: center; padding: 4px 0 0 5px; letter-spacing: -0.15px; }
.find { width: 250px; height: 27px; border: 1px solid #aaa; border-radius: 3px; background: #fff; color: #777; display: flex; align-items: center; padding-left: 10px; }
.find svg { width: 16px; height: 16px; margin-right: 9px; }
.lbl.coord { margin-left: 580px; width: 82px; letter-spacing: -0.5px; }
.box { height: 27px; border: 1px solid #aaa; border-radius: 3px; background: #fff; display: flex; align-items: center; padding-left: 7px; }
.c1 { width: 140px; letter-spacing: -0.35px; } .ext { width: 20px; height: 20px; margin: 0 15px 0 6px; }
.lbl.sc { width: 61px; letter-spacing: -0.6px; }
.c2 { width: 95px; padding-left: 4px; letter-spacing: -0.3px; }
.c2 b { margin-left: auto; width: 26px; height: 25px; border-left: 1px solid #bbb; background: linear-gradient(#fff, #ececec); padding: 9px 7px; }
.box svg { width: 10px; height: 6px; }
.padlock { width: 16px; height: 20px; margin: 0 11px 0 15px; }
.lbl.zo { width: 81px; letter-spacing: -0.6px; }
.c3 { width: 99px; padding-left: 5px; }
.box em { margin-left: auto; width: 18px; height: 25px; border-left: 1px solid #bbb; display: flex; flex-direction: column; gap: 3px; padding: 5px 3px; }
.up { transform: scaleY(-1); }
.lbl.rot { margin-left: 13px; width: 65px; letter-spacing: -0.4px; }
.c4 { width: 101px; padding-left: 5px; margin-right: 7px; }
.lbl.ren { margin-left: 6px; width: 87px; letter-spacing: -0.35px; }
.globe { width: 20px; height: 20px; } .epsg { margin-left: 2px; width: 96px; letter-spacing: -0.4px; } .msg { width: 20px; height: 20px; }

.dialog { position: absolute; left: 248px; top: 62px; width: 1356px; height: 927px; border: 1px solid #8f8f8f; background: #f0f0f0; box-shadow: 2px 4px 12px rgba(0,0,0,.4); display: flex; flex-direction: column; }
.dlg-title { height: 37px; flex: none; background: #fff; display: flex; align-items: center; padding: 0 14px 0 9px; color: #8f8f8f; }
.x { width: 14px; height: 14px; margin-left: auto; }
.dlg-body { flex: 1; min-height: 0; display: flex; }
.side { width: 187px; display: flex; flex-direction: column; background: #5d5d5d; }
.sfind { height: 27px; flex: none; margin: 0 1px 8px; background: #fff; border: 1px solid #999; border-radius: 2px; padding: 5px 9px; }
.sfind svg { width: 16px; height: 16px; }
.slist { flex: 1; min-height: 0; display: flex; }
.slist ul { width: 170px; overflow: hidden; color: #fff; }
.slist li { height: 45px; display: flex; align-items: center; padding: 2px 0 0 6px; }
.slist li.two { height: 50px; line-height: 20px; }
.slist li svg { width: 32px; height: 32px; margin: -3px 8px 0 0; }
.slist li.sel { background: #f0f0f0; color: #000; padding-left: 8px; }
.slist li.sel svg { width: 36px; margin-right: 6px; }
.slist li.dep { height: 44px; }
.abc { font: bold 11px "DejaVu Sans", sans-serif; fill: #222; letter-spacing: -0.5px; }
.abc.big { font-size: 14px; }
.sscroll { width: 17px; display: flex; flex-direction: column; background: #fff; border-left: 1px solid #ccc; }
.sscroll b { height: 17px; border-bottom: 1px solid #bbb; padding: 5px 3px; }
.sscroll svg { width: 10px; height: 6px; }
.sscroll i { height: 669px; border-bottom: 1px solid #bbb; background: linear-gradient(90deg, #fff, #f0f0f0); }
.sscroll s { flex: 1; background: #e6e6e6; }
.sscroll b.dn { border: 0; border-top: 1px solid #bbb; height: 18px; }
.split-v { width: 6px; height: 20px; margin-top: 435px; background-image: radial-gradient(circle, #aaa 0.8px, transparent 1px); background-size: 6px 4px; }
.panel { flex: 1; min-width: 0; display: flex; flex-direction: column; padding: 4px 4px 0 0; font-size: 13px; letter-spacing: -0.75px; }
.combo { height: 30px; flex: none; border: 1px solid #a6a6a6; border-radius: 3px; background: linear-gradient(#fdfdfd, #ebebeb); display: flex; align-items: center; padding-left: 7px; }
.ri { width: 18px; height: 18px; margin-right: 5px; }
.ct { width: 10px; height: 6px; margin: 0 9px 0 auto; }
.table { height: 708px; flex: none; margin: 7px 1px 0 1px; background: #fff; border-top: 1px solid #b0b0b0; overflow: hidden; font-size: 14px; letter-spacing: 0.08px; }
.thead { height: 26px; display: grid; grid-template-columns: 279px 293px 125px 125px 125px 1fr; background: linear-gradient(#fff, #ececec); border-bottom: 1px solid #aaa; line-height: 27px; letter-spacing: -0.05px; }
.thead span { padding-left: 3px; border-left: 1px solid #c4c4c4; }
.thead span:first-child { border: 0; padding-left: 2px; }
.tr2 { height: 22.450px; display: flex; align-items: center; padding-left: 28px; }
.tr2 .half { width: 20px; height: 20px; margin: 0 7px 0 8px; }
.tr2 span { width: 203px; }
.tools { display: flex; gap: 7px; padding-top: 6px; align-items: center; flex: none; height: 37px; margin-left: -1px; }
.tb { width: 35.500px; height: 30px; padding: 5px 7.500px; border: 1px solid #a6a6a6; border-radius: 3px; background: linear-gradient(#fdfdfd, #ebebeb); }
.tb svg { width: 19px; height: 19px; }
.tb.off { border-color: #c6c6c6; }
.btn { width: 100px; height: 27px; padding: 0; border: 1px solid #a6a6a6; border-radius: 3px; background: linear-gradient(#fdfdfd, #ebebeb); font: 13px "Open Sans", "Noto Sans", sans-serif; letter-spacing: -0.55px; color: #000; text-align: center; }
.lv { margin-left: auto; letter-spacing: -0.65px; }
.row2 { padding-top: 7px; flex: none; height: 40px; }
.btn svg { width: 8px; height: 5px; }
.edit { width: 200px; color: #888; display: flex; align-items: center; gap: 7px; padding-left: 4px; border-color: #c0c0c0; letter-spacing: -0.85px; }
.edit svg { opacity: .6; margin-top: -4px; }
.group { height: 22px; flex: none; display: flex; align-items: center; font-weight: bold; letter-spacing: -0.6px; }
.group i { width: 0; border: 7px solid transparent; border-left: 9px solid #333; border-right: 0; margin: 0 13px 0 5px; }
.actions { display: flex; gap: 7.500px; margin-top: 9px; }
.sty { display: flex; align-items: center; padding-left: 24px; margin-right: auto; }
.sty svg { margin: -3px 0 0 25px; }
.hilite { position: absolute; left: 437px; top: 278px; width: 612px; height: 130px; border: 2px solid #ff0000; }
.cursor { position: absolute; left: 1352px; top: 656px; width: 14px; height: 22px; }
```
